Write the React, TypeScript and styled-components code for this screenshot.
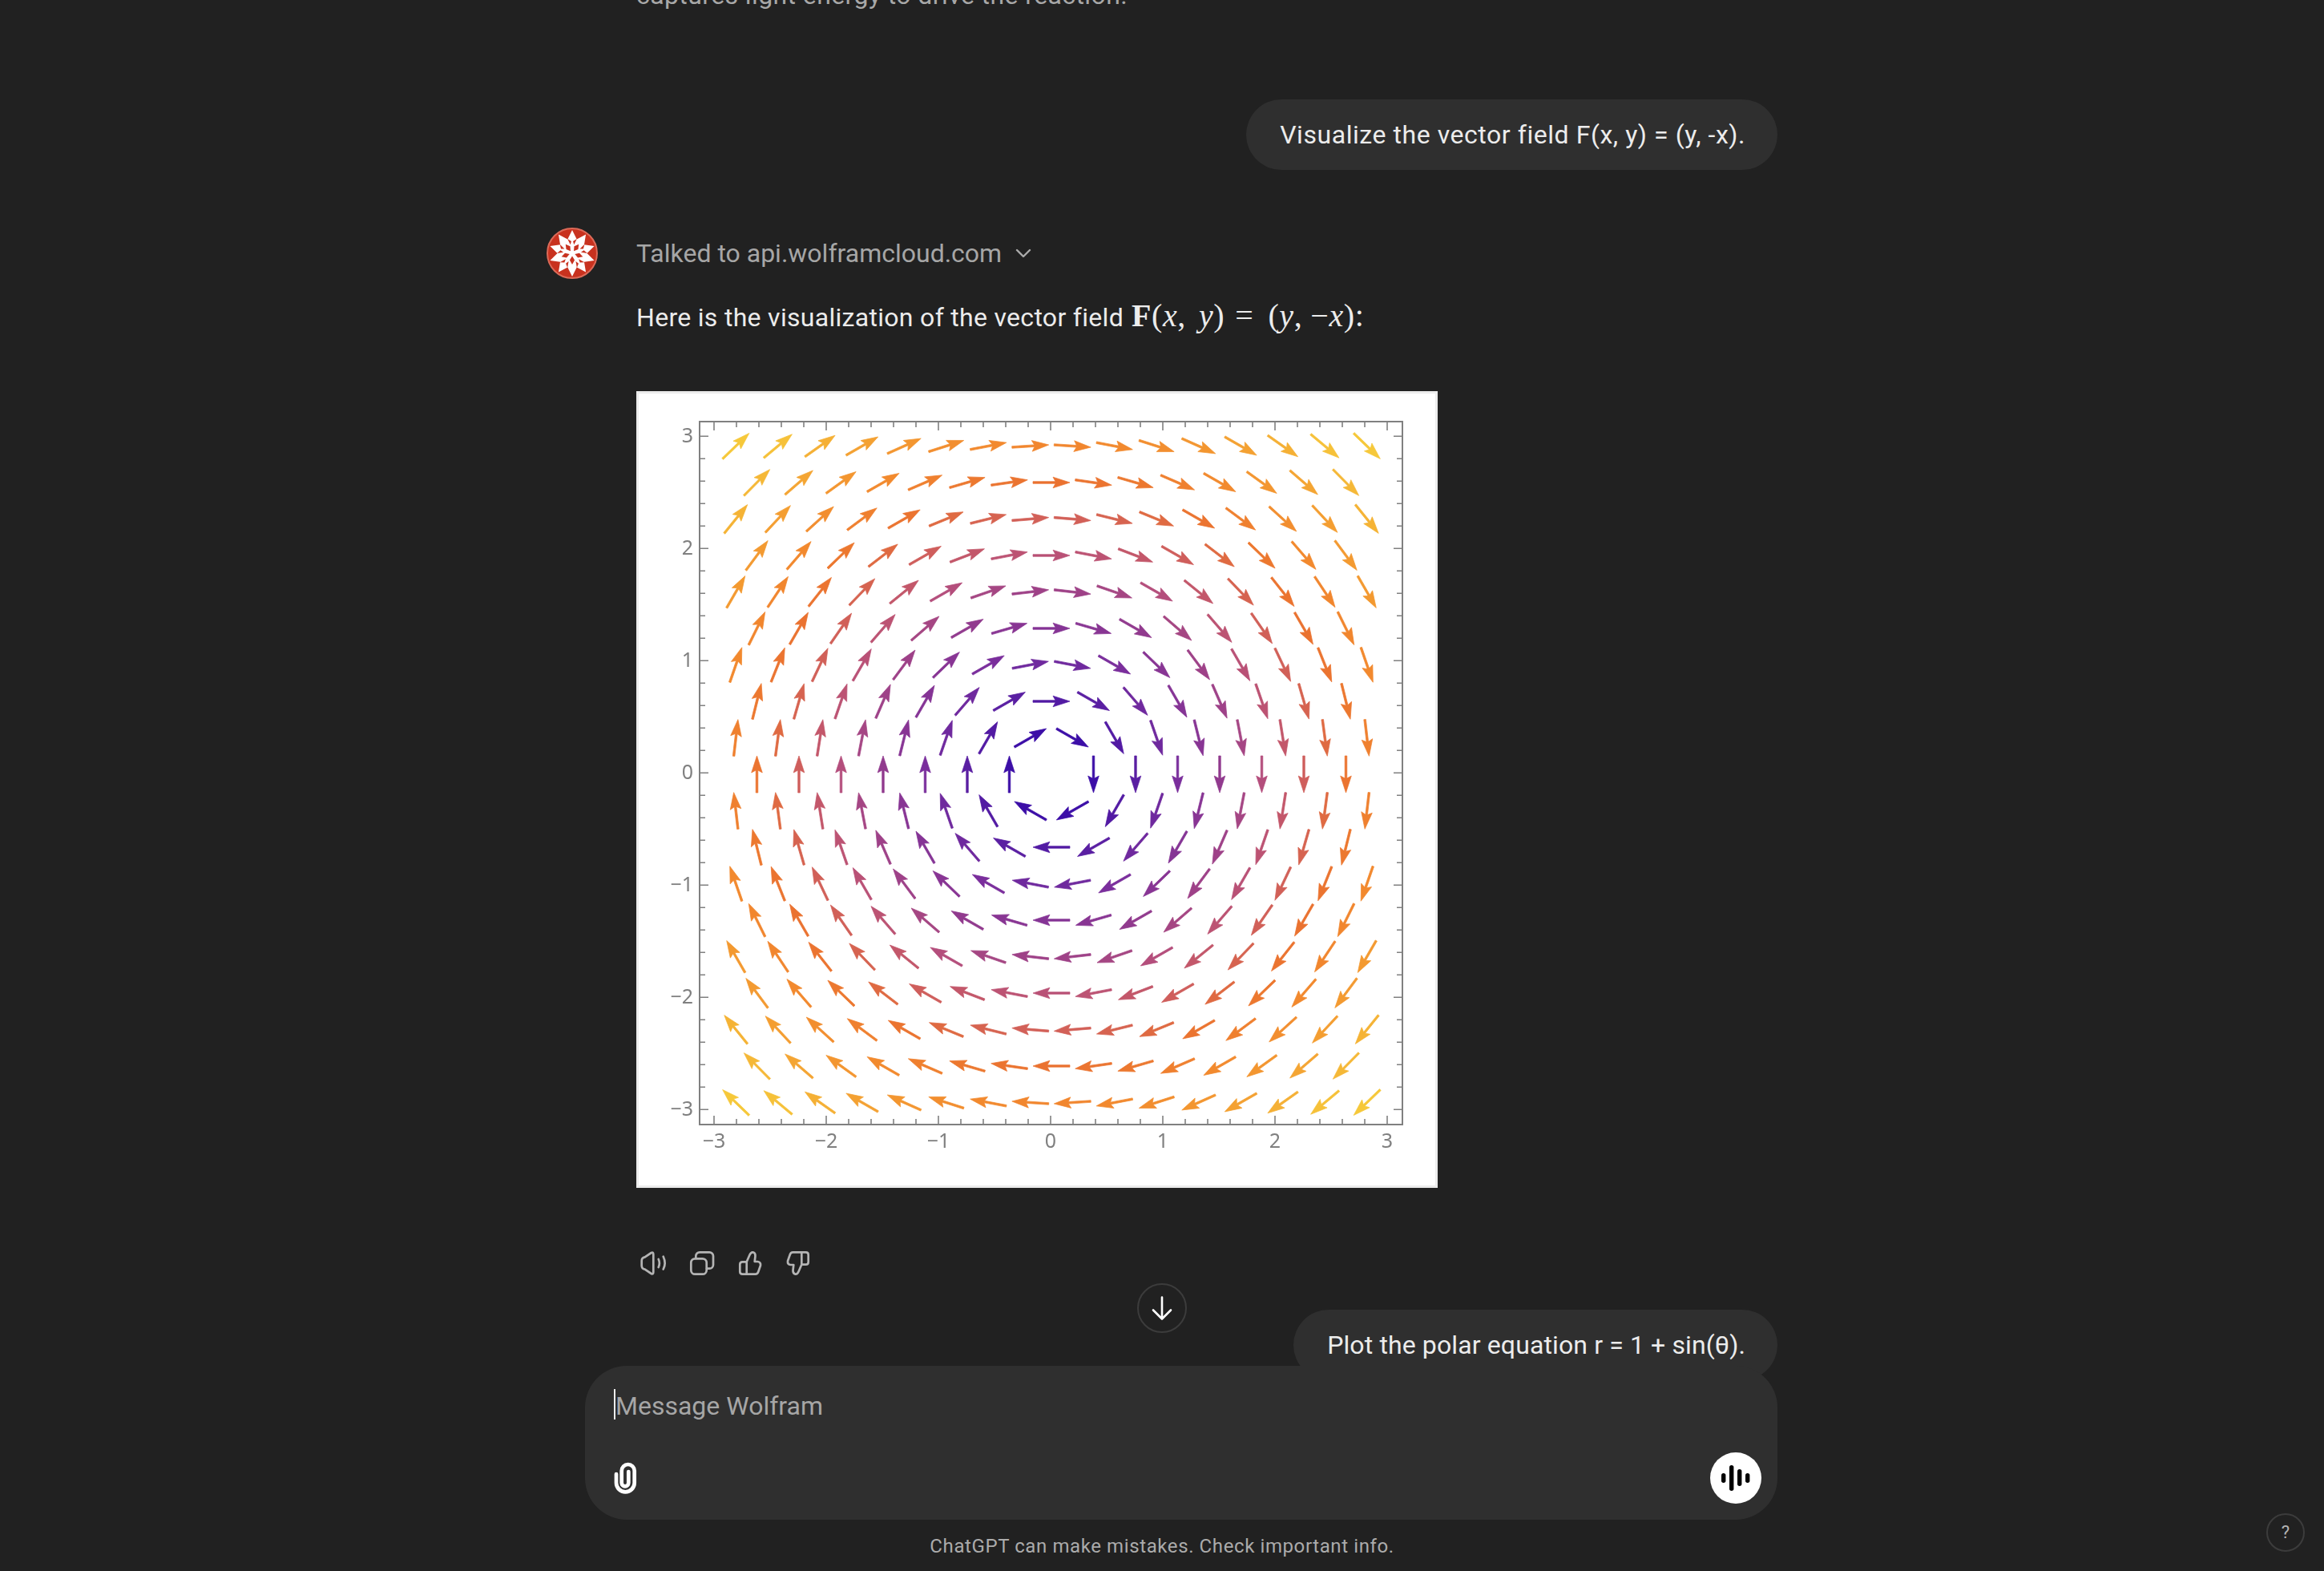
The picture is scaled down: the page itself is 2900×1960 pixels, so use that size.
import React from 'react';
import styled, { createGlobalStyle } from 'styled-components';

const GlobalStyle = createGlobalStyle`
    html, body {
        margin: 0;
        padding: 0;
        background: #212121;
    }
`;

const Page = styled.div`
    position: relative;
    height: 100vh;
    overflow: hidden;
    background: #212121;
    color: #ececec;
    font-family: Roboto, "Liberation Sans", sans-serif;
    font-size: 32px;
    line-height: 48px;
`;

const Thread = styled.div`
    display: flex;
    flex-direction: column;
    width: 1536px;
    margin-left: 682px;
`;

const FadedLine = styled.div`
    margin-top: -30px;
    margin-left: 112px;
    color: #a8a8a8;
    letter-spacing: 0.4px;
`;

const UserBubble = styled.div<{ $gap: number; $tracking: number }>`
    align-self: flex-end;
    display: flex;
    align-items: center;
    height: 88px;
    margin-top: ${(p) => p.$gap}px;
    padding: 0 40px 0 42px;
    border-radius: 44px;
    background: #2f2f2f;
    letter-spacing: ${(p) => p.$tracking}px;
`;

const AssistantRow = styled.div`
    display: flex;
    gap: 48px;
    margin-top: 72px;
`;

const Avatar = styled.svg`
    flex: none;
    width: 64px;
    height: 64px;
`;

const Body = styled.div`
    display: flex;
    flex-direction: column;
    align-items: flex-start;
`;

const ToolRow = styled.div`
    display: flex;
    align-items: center;
    gap: 17px;
    height: 64px;
    color: #a6a6a6;
`;

const Paragraph = styled.div`
    display: flex;
    align-items: baseline;
    margin-top: 22px;
    margin-bottom: 1px;
    letter-spacing: 0.3px;
`;

const MathText = styled.span`
    margin-left: 10px;
    font-family: "Liberation Serif", serif;
    font-size: 40px;
    letter-spacing: 0.6px;
    white-space: pre;
`;

const MathBold = styled.b`
    font-weight: 700;
`;

const MathVar = styled.i`
    font-style: italic;
`;

const MathRel = styled.span`
    margin: 0 18px 0 13px;
`;

const MathComma = styled.span<{ $gap: number }>`
    margin-right: ${(p) => p.$gap}px;
`;

const PlotFrame = styled.div`
    box-sizing: border-box;
    width: 1000px;
    height: 994px;
    margin-top: 67px;
    border: 3px solid #ececec;
    background: #fff;
`;

const PlotSvg = styled.svg`
    display: block;
    width: 994px;
    height: 988px;
    filter: blur(0.6px);
`;

const Actions = styled.div`
    display: flex;
    height: 60px;
    margin-top: 64px;
    margin-left: -8px;
`;

const ActionIcon = styled.div`
    display: flex;
    align-items: center;
    justify-content: center;
    width: 60px;
    height: 60px;
    color: #b4b4b4;
`;

const Dock = styled.div`
    position: absolute;
    left: 0;
    right: 0;
    bottom: 0;
    display: flex;
    flex-direction: column;
`;

const Composer = styled.div`
    box-sizing: border-box;
    display: flex;
    flex-direction: column;
    justify-content: space-between;
    width: 1488px;
    height: 192px;
    margin-left: 730px;
    padding: 29px 20px 20px 36px;
    border-radius: 52px;
    background: #2f2f2f;
`;

const InputLine = styled.div`
    display: flex;
    align-items: center;
    height: 38px;
    color: #a6a6a6;
`;

const Caret = styled.span`
    width: 2px;
    height: 38px;
    background: #ececec;
`;

const Placeholder = styled.span`
    margin-top: 4px;
`;

const ComposerBar = styled.div`
    display: flex;
    align-items: center;
    justify-content: space-between;
    height: 64px;
`;

const VoiceButton = styled.div`
    display: flex;
    align-items: center;
    justify-content: center;
    width: 64px;
    height: 64px;
    border-radius: 50%;
    background: #fff;
`;

const Disclaimer = styled.div`
    height: 64px;
    color: #ababab;
    font-size: 24px;
    line-height: 67px;
    letter-spacing: 0.6px;
    text-align: center;
`;

const ScrollDown = styled.div`
    position: absolute;
    left: 1419px;
    bottom: 297px;
    box-sizing: border-box;
    display: flex;
    align-items: center;
    justify-content: center;
    width: 62px;
    height: 62px;
    border: 2px solid #3c3c3c;
    border-radius: 50%;
    background: #212121;
`;

const HelpButton = styled.div`
    position: absolute;
    right: 24px;
    bottom: 24px;
    box-sizing: border-box;
    display: flex;
    align-items: center;
    justify-content: center;
    width: 48px;
    height: 48px;
    border: 2px solid #3c3c3c;
    border-radius: 50%;
    color: #b4b4b4;
    font-size: 22px;
`;

const CX = 1312;
const CY = 964;
const TICK_X0 = 1311;
const TICK_Y0 = 962.3;
const UNIT = 140;

const STOPS: [number, number[]][] = [
    [0.3, [0x36, 0x0a, 0xa8]],
    [0.75, [0x5a, 0x1f, 0xa2]],
    [1.125, [0x7a, 0x2e, 0x9c]],
    [1.5, [0x91, 0x3a, 0x8e]],
    [1.875, [0xb4, 0x4e, 0x7c]],
    [2.25, [0xcf, 0x5e, 0x5c]],
    [2.6, [0xea, 0x72, 0x30]],
    [3.0, [0xf2, 0x8a, 0x2e]],
    [3.4, [0xf4, 0xa2, 0x32]],
    [3.9, [0xf6, 0xc8, 0x3a]],
];

function fieldColor(r: number) {
    if (r <= STOPS[0][0]) return `rgb(${STOPS[0][1].join(',')})`;
    for (let i = 1; i < STOPS.length; i++) {
        if (r <= STOPS[i][0]) {
            const [r0, c0] = STOPS[i - 1];
            const [r1, c1] = STOPS[i];
            const t = (r - r0) / (r1 - r0);
            return `rgb(${c0.map((c, j) => Math.round(c + (c1[j] - c) * t)).join(',')})`;
        }
    }
    return `rgb(${STOPS[STOPS.length - 1][1].join(',')})`;
}

const ARROW = 'M-23 -1.3 H5 L2 -6.8 L23 0 L2 6.8 L5 1.3 H-23 Z';

function buildArrows() {
    const arrows: { x: number; y: number; angle: number; color: string }[] = [];
    for (let row = -9; row <= 9; row++) {
        const odd = Math.abs(row) % 2 === 1;
        const limit = odd ? 16 : 15;
        for (let i = 0; i < limit; i++) {
            const k = i - (limit - 1) / 2;
            const px = k * 52.5;
            const py = row * 45.5;
            if (px === 0 && py === 0) continue;
            // F(x, y) = (y, -x), turned into screen coordinates
            const angle = (Math.atan2(px, py) * 180) / Math.PI;
            arrows.push({
                x: CX + px,
                y: CY - py,
                angle,
                color: fieldColor(Math.hypot(px, py) / UNIT),
            });
        }
    }
    return arrows;
}

function VectorPlot() {
    const left = 873;
    const right = 1750;
    const top = 524;
    const bottom = 1401;
    const ticks = [];
    for (let i = -15; i <= 15; i++) {
        const major = i % 5 === 0;
        const len = major ? 11 : 7;
        const x = TICK_X0 + i * 28;
        const y = TICK_Y0 + i * 28;
        ticks.push(`M${x} ${bottom}v${-len}M${x} ${top}v${len}M${left} ${y}h${len}M${right} ${y}h${-len}`);
    }
    const labels = [-3, -2, -1, 0, 1, 2, 3];
    const labelText = (n: number) => (n < 0 ? `\u2212${-n}` : `${n}`);
    return (
        <PlotSvg viewBox="797 489 994 988">
            <rect x={left} y={top} width={right - left} height={bottom - top} fill="none" stroke="#808080" strokeWidth="2" />
            <path d={ticks.join('')} stroke="#808080" strokeWidth="1.6" fill="none" />
            {labels.map((n) => (
                <text key={`x${n}`} x={TICK_X0 + n * UNIT} y={1430} textAnchor="middle" fontFamily="'Noto Sans', sans-serif" fontSize="25" fill="#808080">
                    {labelText(n)}
                </text>
            ))}
            {labels.map((n) => (
                <text key={`y${n}`} x={865} y={TICK_Y0 - n * UNIT + 8} textAnchor="end" fontFamily="'Noto Sans', sans-serif" fontSize="25" fill="#808080">
                    {labelText(n)}
                </text>
            ))}
            {buildArrows().map((a, i) => (
                <path key={i} d={ARROW} fill={a.color} stroke={a.color} strokeWidth="0.7" transform={`translate(${a.x} ${a.y}) rotate(${a.angle})`} />
            ))}
        </PlotSvg>
    );
}

function polar(r: number, deg: number) {
    const a = ((deg - 90) * Math.PI) / 180;
    return `${(32 + r * Math.cos(a)).toFixed(2)},${(32 + r * Math.sin(a)).toFixed(2)}`;
}

function WolframLogo() {
    const star: string[] = [];
    for (let i = 0; i < 10; i++) {
        star.push(polar(29, i * 36));
        star.push(polar(18.5, i * 36 + 18));
    }
    const cuts = [];
    for (let i = 0; i < 5; i++) {
        const d = i * 72 + 36;
        cuts.push(
            <polygon key={`k${i}`} points={[polar(3.5, d), polar(9, d - 20), polar(14, d), polar(9, d + 20)].join(' ')} fill="#c8321f" />,
        );
        cuts.push(
            <polygon key={`t${i}`} points={[polar(11, i * 72 - 12), polar(19, i * 72 - 18), polar(15, i * 72 - 4)].join(' ')} fill="#c8321f" />,
        );
        cuts.push(
            <polygon key={`u${i}`} points={[polar(11, i * 72 + 12), polar(19, i * 72 + 18), polar(15, i * 72 + 4)].join(' ')} fill="#c8321f" />,
        );
    }
    return (
        <Avatar viewBox="0 0 64 64">
            <circle cx="32" cy="32" r="31" fill="#c8321f" stroke="#dc6a58" strokeWidth="2" />
            <polygon points={star.join(' ')} fill="#fff" />
            {cuts}
        </Avatar>
    );
}

const iconStroke = {
    fill: 'none',
    stroke: 'currentColor',
    strokeWidth: 2.7,
    strokeLinecap: 'round' as const,
    strokeLinejoin: 'round' as const,
};

function SpeakerIcon() {
    return (
        <svg width="36" height="36" viewBox="0 0 36 36" {...iconStroke}>
            <path d="M2.7 15Q2.7 11 6.7 10.3L14.7 5Q17.3 3.6 17.3 7V29Q17.3 32.4 14.7 31L6.7 25.7Q2.7 25 2.7 21Z" />
            <path d="M23.7 13Q26 18 23.7 23" />
            <path d="M29.7 9.7Q33.6 18 29.7 25.5" />
        </svg>
    );
}

function CopyIcon() {
    return (
        <svg width="36" height="36" viewBox="0 0 36 36" {...iconStroke}>
            <rect x="4.3" y="12.3" width="19.4" height="19.4" rx="5" />
            <path d="M10.3 12V9A4.7 4.7 0 0 1 15 4.3H27.3A4.7 4.7 0 0 1 32 9V20A4.7 4.7 0 0 1 27.3 24.7H24" />
        </svg>
    );
}

function ThumbUpIcon({ flip }: { flip?: boolean }) {
    return (
        <svg width="36" height="36" viewBox="0 0 36 36" {...iconStroke}>
            <path
                transform={flip ? 'rotate(180 18 18)' : undefined}
                d="M13.7 16.3L17.3 8Q19 4 21.5 4.3Q24.7 5 24.5 9L23.7 16H27.5Q31.5 16.5 31 20.7L28.3 28.5Q27.3 31.6 24.7 31.6H8.5Q5.3 31.6 5.3 28.5V19.5Q5.3 16.3 8.5 16.3H13.7V31.6"
            />
        </svg>
    );
}

function PaperclipIcon() {
    return (
        <svg width="30" height="40" viewBox="0 0 30 40" fill="none" stroke="#fff" strokeWidth="4.7" strokeLinecap="round">
            <path d="M3 15V26A11.35 11.35 0 0 0 25.7 26V11A8 8 0 0 0 9.7 11V26A4.3 4.3 0 0 0 18.3 26V12" />
        </svg>
    );
}

function VoiceIcon() {
    return (
        <svg width="36" height="32" viewBox="0 0 36 32" fill="#000">
            <rect x="0" y="10" width="5.4" height="12" rx="2.7" />
            <rect x="10" y="0" width="5.4" height="32" rx="2.7" />
            <rect x="20" y="5" width="5.4" height="21" rx="2.7" />
            <rect x="30" y="10" width="5.4" height="12" rx="2.7" />
        </svg>
    );
}

function App() {
    return (
        <Page>
            <GlobalStyle />
            <Thread>
                <FadedLine>captures light energy to drive the reaction.</FadedLine>
                <UserBubble $gap={106} $tracking={0.55}>Visualize the vector field F(x, y) = (y, -x).</UserBubble>
                <AssistantRow>
                    <WolframLogo />
                    <Body>
                        <ToolRow>
                            Talked to api.wolframcloud.com
                            <svg width="20" height="12" viewBox="0 0 20 12" fill="none" stroke="#aaa" strokeWidth="2.4" strokeLinecap="round" strokeLinejoin="round">
                                <path d="M2 2L10 10L18 2" />
                            </svg>
                        </ToolRow>
                        <Paragraph>
                            Here is the visualization of the vector field
                            <MathText>
                                <MathBold>F</MathBold>(<MathVar>x</MathVar><MathComma $gap={16}>,</MathComma><MathVar>y</MathVar>)<MathRel>=</MathRel>(<MathVar>y</MathVar><MathComma $gap={10}>,</MathComma>{'\u2212'}<MathVar>x</MathVar>):
                            </MathText>
                        </Paragraph>
                        <PlotFrame>
                            <VectorPlot />
                        </PlotFrame>
                        <Actions>
                            <ActionIcon><SpeakerIcon /></ActionIcon>
                            <ActionIcon><CopyIcon /></ActionIcon>
                            <ActionIcon><ThumbUpIcon /></ActionIcon>
                            <ActionIcon><ThumbUpIcon flip /></ActionIcon>
                        </Actions>
                    </Body>
                </AssistantRow>
                <UserBubble $gap={28} $tracking={0.12}>Plot the polar equation r = 1 + sin(θ).</UserBubble>
            </Thread>
            <ScrollDown>
                <svg width="36" height="36" viewBox="0 0 36 36" fill="none" stroke="#fff" strokeWidth="2.6" strokeLinecap="round" strokeLinejoin="round">
                    <path d="M18 4.5V31M7 20.5L18 31.5L29 20.5" />
                </svg>
            </ScrollDown>
            <Dock>
                <Composer>
                    <InputLine>
                        <Caret />
                        <Placeholder>Message Wolfram</Placeholder>
                    </InputLine>
                    <ComposerBar>
                        <PaperclipIcon />
                        <VoiceButton><VoiceIcon /></VoiceButton>
                    </ComposerBar>
                </Composer>
                <Disclaimer>ChatGPT can make mistakes. Check important info.</Disclaimer>
            </Dock>
            <HelpButton>?</HelpButton>
        </Page>
    );
}

export default App;
